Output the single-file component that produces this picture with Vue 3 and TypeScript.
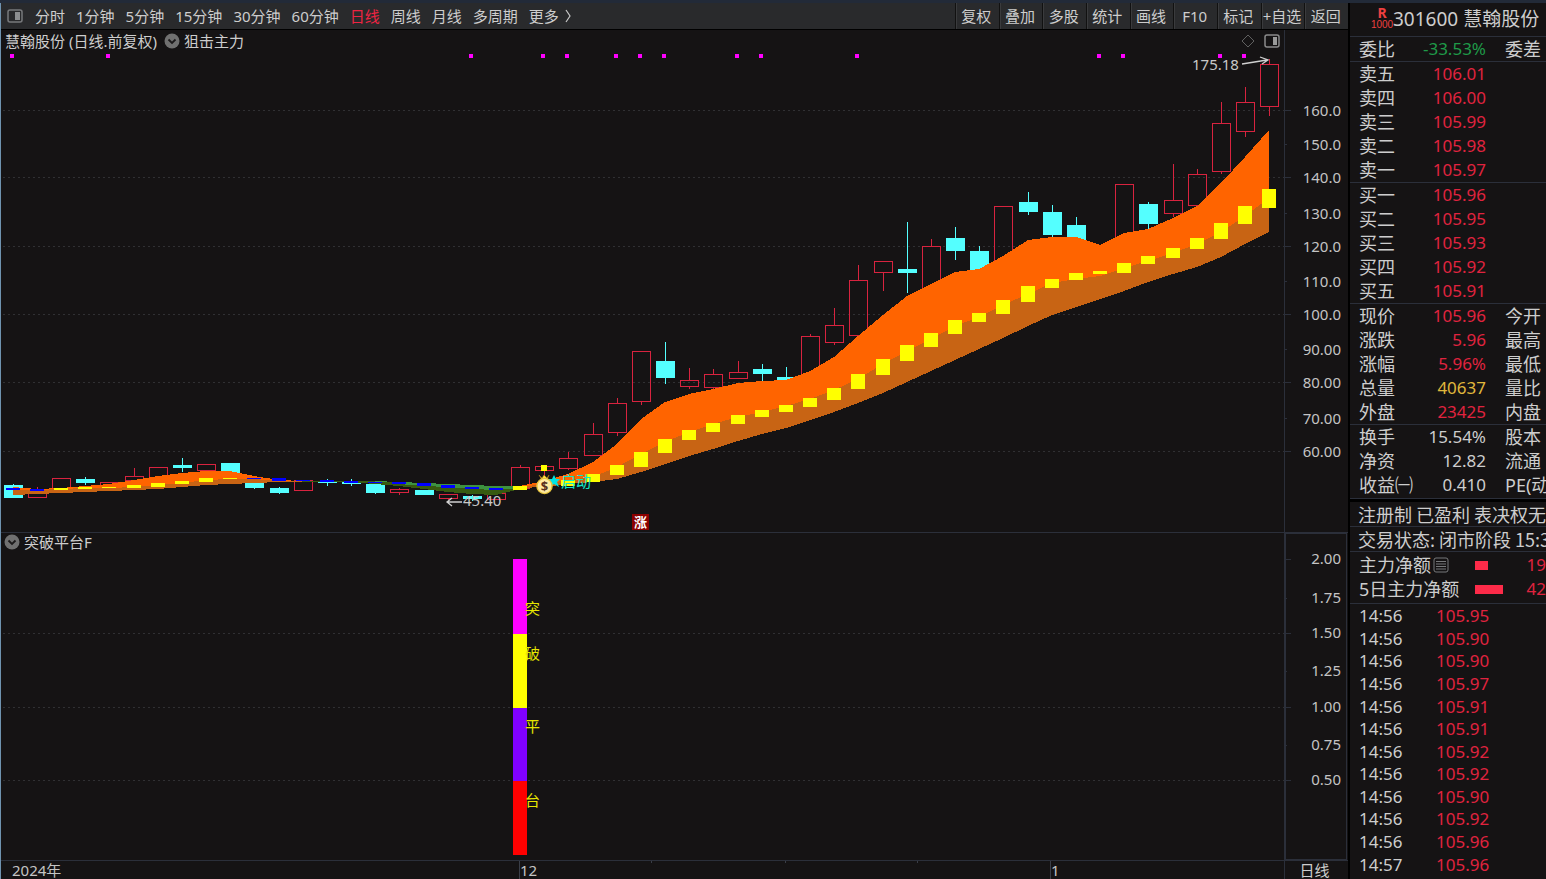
<script setup lang="ts">
type Candle = [kind: 'up' | 'down', high: number, top: number, bottom: number, low: number]
type Band = [upper: number, middle: number, lower: number]

const periods = ['分时', '1分钟', '5分钟', '15分钟', '30分钟', '60分钟', '日线', '周线', '月线', '多周期']
const actions = ['复权', '叠加', '多股', '统计', '画线', 'F10', '标记', '+自选', '返回']

const candles: Candle[] = [
  ['down', 484, 485, 498, 498], ['up', 487, 489, 497, 497], ['up', 478, 478, 490, 490],
  ['down', 477, 479, 483, 485], ['up', 482, 482, 486, 486], ['up', 468, 476, 480, 480],
  ['up', 467, 467, 478, 478], ['down', 458, 465, 468, 472], ['up', 464, 464, 470, 472],
  ['down', 463, 463, 474, 474], ['down', 480, 480, 488, 489], ['down', 487, 488, 493, 494],
  ['up', 480, 480, 490, 490], ['down', 479, 481, 483, 486], ['down', 479, 482, 484, 486],
  ['down', 484, 484, 493, 494], ['up', 488, 489, 492, 495], ['down', 490, 490, 495, 495],
  ['up', 494, 494, 498, 500], ['down', 495, 496, 499, 501], ['up', 493, 493, 499, 499],
  ['up', 465, 467, 488, 488], ['up', 465, 466, 470, 476], ['up', 452, 458, 468, 470],
  ['up', 423, 434, 455, 455], ['up', 398, 403, 432, 436], ['up', 351, 351, 401, 405],
  ['down', 342, 361, 378, 384], ['up', 368, 380, 386, 389], ['up', 369, 374, 387, 389],
  ['up', 361, 372, 378, 378], ['down', 364, 369, 374, 381], ['down', 367, 377, 382, 382],
  ['up', 334, 336, 378, 378], ['up', 308, 325, 342, 345], ['up', 265, 280, 335, 335],
  ['up', 261, 261, 272, 291], ['down', 222, 269, 273, 293], ['up', 239, 246, 290, 290],
  ['down', 227, 238, 251, 260], ['down', 246, 251, 272, 272], ['up', 206, 206, 265, 265],
  ['down', 192, 202, 212, 215], ['down', 205, 212, 235, 237], ['down', 217, 225, 241, 241],
  ['down', 248, 250, 256, 258], ['up', 184, 184, 240, 240], ['down', 202, 204, 224, 229],
  ['up', 164, 200, 213, 217], ['up', 169, 174, 205, 205], ['up', 102, 123, 171, 174],
  ['up', 87, 102, 131, 137], ['up', 59, 64, 106, 116],
]

const earlyBand: Band[] = [
  [487, 490, 495], [489, 490, 494], [488, 489, 493], [486, 488, 492], [484, 488, 491],
  [480, 487, 490], [476, 485, 489], [473, 483, 487], [471, 480, 485], [471, 479, 484],
  [476, 479, 483], [480, 481, 482], [481, 481, 482],
]
const weakBand: Band[] = [
  [481, 481, 482], [481, 481, 482], [481, 481, 482], [481, 482, 484], [482, 484, 486],
  [483, 486, 489], [484, 487, 492], [485, 489, 494], [486, 490, 495], [486, 488, 489],
]
const strongBand: Band[] = [
  [486, 487, 488], [481, 484, 487], [474, 480, 484], [462, 477, 482], [444, 467, 479],
  [419, 454, 472], [402, 442, 464], [394, 432, 456], [389, 424, 449], [383, 417, 441],
  [381, 412, 434], [380, 406, 428], [371, 399, 420], [357, 390, 412], [336, 379, 403],
  [315, 364, 393], [296, 351, 382], [284, 339, 371], [272, 326, 360], [269, 317, 349],
  [256, 305, 338], [240, 294, 326], [237, 283, 315], [237, 279, 307], [245, 276, 299],
  [233, 268, 291], [229, 261, 282], [218, 253, 274], [206, 244, 267], [183, 232, 257],
  [157, 216, 244], [130, 198, 232],
]
const blocks: [number, number][] = [
  [488, 490], [489, 491], [488, 490], [487, 489], [487, 488], [485, 488], [483, 487],
  [481, 484], [478, 482], [478, 479], [478, 479], [478, 481], [480, 481], [480, 482],
  [481, 483], [482, 483], [482, 484], [483, 486], [485, 488], [487, 489], [488, 490],
  [486, 490], [485, 488], [480, 486], [474, 482], [465, 475], [452, 467], [439, 453],
  [430, 440], [423, 432], [415, 424], [410, 417], [405, 412], [398, 407], [388, 400],
  [374, 389], [359, 375], [345, 361], [333, 347], [320, 334], [313, 322], [300, 314],
  [286, 302], [279, 288], [273, 280], [271, 274], [263, 273], [256, 264], [248, 258],
  [238, 249], [223, 239], [206, 224], [189, 208],
]
const isBlue = (i: number): boolean => i < 2 || (i > 9 && i < 21)
const markers = [0, 4, 19, 22, 23, 25, 26, 27, 30, 31, 35, 45, 46, 50, 51]

const xAt = (i: number): number => Math.round(12.7 + i * 24.165)

function ribbon(band: Band[], start: number, a: number, b: number): string {
  const first = band.map((p, i) => `${xAt(start + i)},${p[a]}`)
  const second = band.map((p, i) => `${xAt(start + i)},${p[b]}`).reverse()
  return [...first, ...second].join(' ')
}

const priceTicks: [string, number][] = [
  ['160.0', 111], ['150.0', 145], ['140.0', 178], ['130.0', 214], ['120.0', 247], ['110.0', 282],
  ['100.0', 315], ['90.00', 350], ['80.00', 383], ['70.00', 419], ['60.00', 452],
]
const signalTicks: [string, number][] = [
  ['2.00', 559], ['1.75', 598], ['1.50', 633], ['1.25', 671], ['1.00', 707], ['0.75', 745], ['0.50', 780],
]
const signalBars = [
  { y: 559, h: 75, color: '#ff00ff', text: '突', ty: 614 },
  { y: 634, h: 74, color: '#ffff00', text: '破', ty: 659 },
  { y: 708, h: 73, color: '#8000ff', text: '平', ty: 732 },
  { y: 781, h: 74, color: '#ff0000', text: '台', ty: 806 },
]

interface Row { label: string; value: string; tone: string; extra?: string }
const groups: Row[][] = [
  [{ label: '委比', value: '-33.53%', tone: 'green', extra: '委差' }],
  [
    { label: '卖五', value: '106.01', tone: 'red' },
    { label: '卖四', value: '106.00', tone: 'red' },
    { label: '卖三', value: '105.99', tone: 'red' },
    { label: '卖二', value: '105.98', tone: 'red' },
    { label: '卖一', value: '105.97', tone: 'red' },
  ],
  [
    { label: '买一', value: '105.96', tone: 'red' },
    { label: '买二', value: '105.95', tone: 'red' },
    { label: '买三', value: '105.93', tone: 'red' },
    { label: '买四', value: '105.92', tone: 'red' },
    { label: '买五', value: '105.91', tone: 'red' },
  ],
  [
    { label: '现价', value: '105.96', tone: 'red', extra: '今开' },
    { label: '涨跌', value: '5.96', tone: 'red', extra: '最高' },
    { label: '涨幅', value: '5.96%', tone: 'red', extra: '最低' },
    { label: '总量', value: '40637', tone: 'gold', extra: '量比' },
    { label: '外盘', value: '23425', tone: 'red', extra: '内盘' },
  ],
  [
    { label: '换手', value: '15.54%', tone: 'plain', extra: '股本' },
    { label: '净资', value: '12.82', tone: 'plain', extra: '流通' },
    { label: '收益㈠', value: '0.410', tone: 'plain', extra: 'PE(动)' },
  ],
]
const trades: [string, string][] = [
  ['14:56', '105.95'], ['14:56', '105.90'], ['14:56', '105.90'], ['14:56', '105.97'],
  ['14:56', '105.91'], ['14:56', '105.91'], ['14:56', '105.92'], ['14:56', '105.92'],
  ['14:56', '105.90'], ['14:56', '105.92'], ['14:56', '105.96'], ['14:57', '105.96'],
]
</script>

<template>
  <div class="terminal">
    <main class="workspace">
      <nav class="toolbar">
        <button class="icon-btn" aria-label="侧栏">
          <svg width="16" height="16" viewBox="0 0 16 16">
            <rect x="1" y="2" width="14" height="12" rx="2" fill="none" stroke="#77797b" stroke-width="1.5" />
            <rect x="8" y="4" width="5" height="8" fill="#8c8e90" />
          </svg>
        </button>
        <div class="periods">
          <button v-for="p in periods" :key="p" :class="{ active: p === '日线' }">{{ p }}</button>
          <button class="more">更多
            <svg width="7" height="14" viewBox="0 0 7 14"><path d="M1 1 L5 7 L1 13" fill="none" stroke="#c8c8c8" stroke-width="1.2" /></svg>
          </button>
        </div>
        <div class="actions">
          <button v-for="a in actions" :key="a">{{ a }}</button>
        </div>
      </nav>

      <section class="panel price">
        <div class="plot">
          <header class="panel-head">
            <span>慧翰股份 (日线.前复权)</span>
            <button class="icon-btn" aria-label="指标菜单">
              <svg width="16" height="16" viewBox="0 0 16 16">
                <circle cx="8" cy="8" r="7.5" fill="#707070" />
                <path d="M4.5 6.5 L8 10 L11.5 6.5" fill="none" stroke="#1c1a1b" stroke-width="1.8" />
              </svg>
            </button>
            <span>狙击主力</span>
            <span class="tools">
              <svg width="16" height="16" viewBox="0 0 16 16"><path d="M8 2 L14 8 L8 14 L2 8 Z" fill="none" stroke="#606060" /></svg>
              <svg width="16" height="16" viewBox="0 0 16 16">
                <rect x="1" y="2" width="14" height="12" rx="2" fill="none" stroke="#8a8a8a" stroke-width="1.5" />
                <rect x="9" y="4" width="4" height="8" fill="#9a9a9a" />
              </svg>
            </span>
          </header>
          <svg class="canvas" viewBox="1 54 1283 478" preserveAspectRatio="xMinYMin meet">
            <g shape-rendering="crispEdges">
              <template v-for="(t, i) in priceTicks" :key="t[0]">
                <line v-if="i % 2 === 0" x1="3" x2="1284" :y1="t[1] - 0.5" :y2="t[1] - 0.5" class="grid" />
              </template>
              <rect v-for="m in markers" :key="m" :x="xAt(m) - 3" y="54" width="4" height="4" fill="#ff00ff" />
              <g v-for="(c, i) in candles" :key="i" :class="c[0]">
                <rect :x="xAt(i)" :y="c[1]" width="1" :height="c[2] - c[1]" class="wick" />
                <rect :x="xAt(i)" :y="c[3]" width="1" :height="c[4] - c[3]" class="wick" />
                <rect v-if="c[0] === 'up'" :x="xAt(i) - 8.5" :y="c[2] + 0.5" width="18" :height="c[3] - c[2]" class="body" />
                <rect v-else :x="xAt(i) - 9" :y="c[2]" width="19" :height="c[3] - c[2]" class="body" />
              </g>
              <polygon :points="ribbon(earlyBand, 0, 1, 2)" fill="#c86414" />
              <polygon :points="ribbon(earlyBand, 0, 0, 1)" fill="#ff6400" />
              <polygon :points="ribbon(weakBand, 12, 1, 2)" fill="#375a10" />
              <polygon :points="ribbon(weakBand, 12, 0, 1)" fill="#3c9140" />
              <polyline points="302,481 351,481 399,483" fill="none" stroke="#375a10" />
              <polygon :points="ribbon(strongBand, 21, 1, 2)" fill="#c86414" />
              <polygon :points="ribbon(strongBand, 21, 0, 1)" fill="#ff6400" />
              <rect
                v-for="(b, i) in blocks" :key="i" :x="xAt(i) - 7" :y="b[0]" width="14" :height="b[1] - b[0]"
                :fill="isBlue(i) ? '#0000ff' : '#ffff00'"
              />
              <rect x="541" y="465" width="6" height="6" fill="#ffff00" />
            </g>
            <text x="1192" y="70" class="note">175.18</text>
            <path d="M1242 64 L1267 60 M1260 57 L1268 60 L1262 64" class="arrow" />
            <text x="463" y="506" class="note">45.40</text>
            <path d="M447 502 H462 M452 498 L447 502 L452 506" class="arrow" />
            <path d="M554 475 L556 479 L560 479 L557 482 L559 487 L554 484 L549 487 L551 482 L548 479 L552 479 Z" fill="#00e5e5" />
            <text x="561" y="487" class="launch">启动</text>
            <path d="M539 475 L542 478 L544 475 L547 478 L549 475 L547 480 H542 Z" fill="#ffe640" stroke="#a87818" stroke-width="0.6" />
            <circle cx="544.5" cy="486" r="7.6" fill="#ffeaa0" stroke="#e8c53c" stroke-width="1.4" />
            <text x="544.5" y="491" text-anchor="middle" class="coin">$</text>
            <rect x="632" y="514" width="17" height="16" fill="#8c0000" />
            <text x="640.5" y="527" text-anchor="middle" class="rise">涨</text>
          </svg>
        </div>
        <svg class="axis" viewBox="1284 30 64 502" preserveAspectRatio="xMinYMin meet">
          <g shape-rendering="crispEdges" fill="#2b2f3a">
            <rect x="1284" y="30" width="1" height="502" />
            <rect v-for="(t, i) in priceTicks" :key="t[0]" x="1285" :y="t[1] - 1" :width="i % 2 ? 2 : 6" height="1" />
          </g>
          <text v-for="t in priceTicks" :key="t[0]" x="1341" :y="t[1] + 5" text-anchor="end">{{ t[0] }}</text>
        </svg>
      </section>

      <section class="panel signal">
        <div class="plot">
          <header class="panel-head">
            <button class="icon-btn" aria-label="指标菜单">
              <svg width="16" height="16" viewBox="0 0 16 16">
                <circle cx="8" cy="8" r="7.5" fill="#707070" />
                <path d="M4.5 6.5 L8 10 L11.5 6.5" fill="none" stroke="#1c1a1b" stroke-width="1.8" />
              </svg>
            </button>
            <span>突破平台F</span>
          </header>
          <svg class="canvas" viewBox="1 553 1283 307" preserveAspectRatio="xMinYMin meet">
            <line v-for="y in [633, 707, 780]" :key="y" x1="3" x2="1284" :y1="y + 0.5" :y2="y + 0.5" class="grid" />
            <rect v-for="b in signalBars" :key="b.y" x="513" :y="b.y" width="14" :height="b.h" :fill="b.color" shape-rendering="crispEdges" />
            <text v-for="b in signalBars" :key="b.text" x="525" :y="b.ty" class="signal-text">{{ b.text }}</text>
          </svg>
        </div>
        <svg class="axis boxed" viewBox="1284 533 64 327" preserveAspectRatio="xMinYMin meet">
          <g shape-rendering="crispEdges" fill="#2b2f3a">
            <path d="M1284 533 H1347 V860 H1284 Z M1286 534 V859 H1346 V534 Z" fill-rule="evenodd" />
            <rect v-for="(t, i) in signalTicks" :key="t[0]" x="1286" :y="t[1]" :width="i % 2 ? 1 : 5" height="1" />
          </g>
          <text v-for="t in signalTicks" :key="t[0]" x="1341" :y="t[1] + 5" text-anchor="end">{{ t[0] }}</text>
        </svg>
      </section>

      <footer class="timeline">
        <svg class="dates" viewBox="1 861 1283 18" preserveAspectRatio="xMinYMin meet">
          <g shape-rendering="crispEdges" fill="#3a3e48">
            <rect x="519" y="861" width="1" height="18" />
            <rect x="1050" y="861" width="1" height="18" />
            <rect v-for="x in [651, 785, 917]" :key="x" :x="x" y="861" width="1" height="2" />
          </g>
          <text x="12" y="876">2024年</text>
          <text x="520" y="876">12</text>
          <text x="1051" y="876">1</text>
        </svg>
        <span class="cycle">日线</span>
      </footer>
    </main>

    <aside class="quote">
      <header class="stock">
        <span class="badge"><b>R</b><i>1000</i></span>
        <span>301600 慧翰股份</span>
      </header>
      <table v-for="(g, gi) in groups" :key="gi" class="grid-table">
        <tbody>
          <tr v-for="r in g" :key="r.label">
            <th scope="row">{{ r.label }}</th>
            <td :class="r.tone">{{ r.value }}</td>
            <td class="extra">{{ r.extra }}</td>
          </tr>
        </tbody>
      </table>
      <div class="divider"></div>
      <p class="info">注册制 已盈利 表决权无差异</p>
      <p class="info">交易状态: 闭市阶段 15:30</p>
      <div class="funds">
        <div class="fund">
          <span class="fund-name">主力净额
            <svg width="16" height="16" viewBox="0 0 16 16">
              <rect x="1" y="1" width="14" height="14" rx="2" fill="none" stroke="#77797b" />
              <path d="M3 4.5 H13 M3 7 H13 M3 9.5 H13 M3 12 H13" stroke="#77797b" />
            </svg>
          </span>
          <span class="bar short"></span><span class="amount">19</span>
        </div>
        <div class="fund">
          <span class="fund-name">5日主力净额</span>
          <span class="bar long"></span><span class="amount">42</span>
        </div>
      </div>
      <table class="trades">
        <tbody>
          <tr v-for="(t, i) in trades" :key="i">
            <td class="time">{{ t[0] }}</td>
            <td class="red">{{ t[1] }}</td>
          </tr>
        </tbody>
      </table>
    </aside>
  </div>
</template>

<style>
body {
  margin: 0;
  background: #151314;
}
</style>

<style scoped>
.terminal {
  box-sizing: border-box;
  display: flex;
  min-height: 100vh;
  overflow: hidden;
  border-top: 3px solid #222a38;
  background: #151314;
  color: #cdcdcd;
  font-family: "Noto Sans", "Noto Sans CJK SC", sans-serif;
  font-size: 15px;
  line-height: 20px;
}
button {
  margin: 0;
  padding: 0;
  border: 0;
  background: none;
  color: inherit;
  font: inherit;
  white-space: nowrap;
}
.workspace {
  display: flex;
  flex: 1;
  flex-direction: column;
  min-width: 0;
  border-left: 1px solid #6f93b0;
}
.toolbar {
  display: flex;
  align-items: stretch;
  height: 26px;
  border-bottom: 1px solid #000;
  background: #292a2c;
}
.icon-btn {
  display: flex;
  align-items: center;
}
.toolbar .icon-btn {
  padding: 0 12px 0 6px;
}
.periods {
  display: flex;
  flex: 1;
  gap: 11px;
}
.active {
  color: #ee2443;
}
.more {
  display: flex;
  align-items: center;
  gap: 6px;
}
.actions {
  display: flex;
  width: 393px;
}
.actions button {
  flex: 1 1 0;
  padding-right: 2px;
  border-left: 1px solid #111;
  box-shadow: inset 1px 0 #3a3b3d;
}
.panel {
  display: flex;
  min-height: 0;
}
.price {
  flex: 502 1 0;
}
.signal {
  flex: 327 1 0;
  border-top: 1px solid #2b2f3a;
}
.plot {
  display: flex;
  flex: 1;
  flex-direction: column;
  min-width: 0;
}
.panel-head {
  box-sizing: border-box;
  display: flex;
  align-items: center;
  gap: 4px;
  height: 24px;
  padding: 0 4px 2px;
}
.panel-head .icon-btn {
  padding-left: 3px;
}
.signal .panel-head {
  height: 20px;
  padding-left: 0;
}
.tools {
  display: flex;
  gap: 8px;
  margin-left: auto;
}
.canvas {
  display: block;
  flex: 1;
  width: 100%;
  min-height: 0;
}
.axis {
  flex: 0 0 64px;
  width: 64px;
}
.axis text,
.dates text {
  fill: #c4c4c4;
  font-size: 15px;
}
.grid {
  stroke: #303033;
  stroke-dasharray: 2 3;
}
.up .wick {
  fill: #d8233f;
}
.up .body {
  fill: none;
  stroke: #d8233f;
}
.down .wick,
.down .body {
  fill: #54ffff;
}
.note {
  fill: #c8c8c8;
  font-size: 15px;
}
.arrow {
  fill: none;
  stroke: #d0d0d0;
  stroke-width: 1.3;
}
.launch {
  fill: #10e6c8;
  font-size: 15px;
}
.coin {
  fill: #5a3020;
  font-size: 13px;
  font-weight: 700;
}
.rise {
  fill: #fff;
  font-size: 13px;
  font-weight: 700;
}
.signal-text {
  fill: #e6e600;
  font-size: 15px;
}
.timeline {
  display: flex;
  height: 18px;
  border-top: 1px solid #2b2f3a;
}
.dates {
  flex: 1;
  min-width: 0;
}
.cycle {
  box-sizing: border-box;
  width: 64px;
  padding-right: 4px;
  border-left: 1px solid #2b2f3a;
  line-height: 18px;
  text-align: center;
}
.quote {
  display: flex;
  flex: 0 0 196px;
  flex-direction: column;
  overflow: hidden;
  border-left: 2px solid #000;
  font-size: 18px;
  line-height: 24px;
  white-space: nowrap;
}
.stock {
  box-sizing: border-box;
  display: flex;
  align-items: center;
  height: 33px;
  padding: 0 0 2px 21px;
  font-size: 19px;
}
.badge {
  display: flex;
  flex-direction: column;
  align-items: center;
  width: 22px;
  color: #ee4040;
  font-size: 14px;
  line-height: 12px;
}
.badge i {
  font-family: "Liberation Sans", sans-serif;
  font-size: 10px;
  font-style: normal;
  line-height: 12px;
}
.grid-table {
  width: 100%;
  border-collapse: separate;
  border-spacing: 0;
  border-top: 1px solid #2b2f3a;
  table-layout: fixed;
}
th,
td {
  height: 24px;
  padding: 0;
  font-weight: 400;
  line-height: 24px;
  text-align: right;
}
th {
  width: 61px;
  padding-left: 9px;
  text-align: left;
}
td {
  width: 66px;
  font-size: 17px;
}
.grid-table .extra {
  width: auto;
  padding-left: 19px;
  font-size: 18px;
  text-align: left;
}
.red {
  color: #e0233f;
}
.green {
  color: #1f9a48;
}
.gold {
  color: #e0b83c;
}
.divider {
  height: 3px;
  margin-top: 1px;
  border-top: 1px solid #2b2f3a;
  background: #000;
}
.info {
  height: 24px;
  margin: 0;
  padding-left: 8px;
  border-bottom: 1px solid #2b2f3a;
  font-family: "Noto Sans CJK SC", sans-serif;
}
.funds {
  padding: 1px 0 2px;
  border-bottom: 1px solid #2b2f3a;
}
.fund {
  display: flex;
  align-items: center;
  height: 24px;
  padding-left: 9px;
}
.fund-name {
  display: flex;
  align-items: center;
  gap: 2px;
  width: 116px;
}
.bar {
  height: 9px;
  background: #fd2b49;
}
.short {
  width: 13px;
  margin-right: 39px;
}
.long {
  width: 28px;
  margin-right: 24px;
}
.amount {
  color: #e0233f;
  font-size: 17px;
}
.trades {
  flex: 1;
  width: 100%;
  margin: 1px 0 3px;
  border-collapse: separate;
  border-spacing: 0;
}
.trades td {
  width: auto;
  height: 22px;
  line-height: 22px;
  text-align: left;
}
.trades .time {
  width: 77px;
  padding-left: 9px;
}
</style>
